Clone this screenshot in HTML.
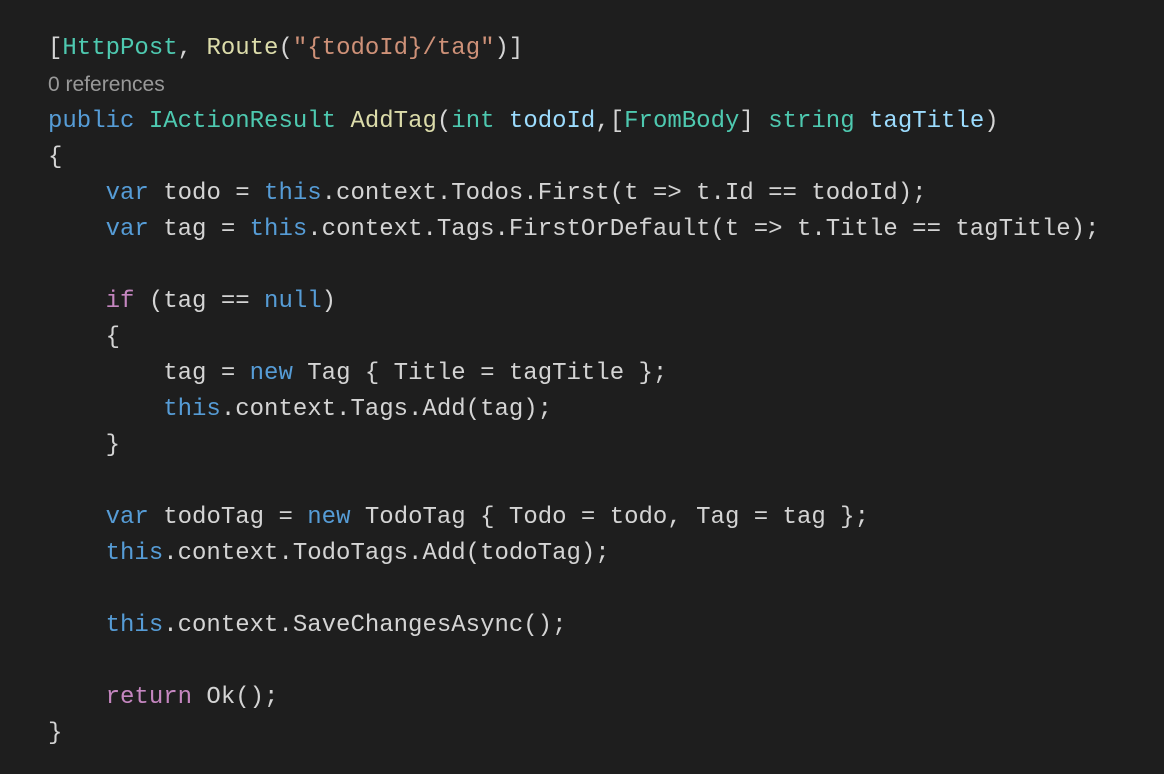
<!DOCTYPE html>
<html><head><meta charset="utf-8"><style>
body{margin:0;background:#1e1e1e;width:1164px;height:774px;overflow:hidden}
pre{margin:0;position:absolute;left:48px;top:31px;font-family:"Liberation Mono",monospace;font-size:24px;line-height:36px;color:#d4d4d4}
.k{color:#569cd6}.t{color:#4ec9b0}.f{color:#dcdcaa}.s{color:#ce9178}.p{color:#9cdcfe}.c{color:#c586c0}
.r{font-family:"Liberation Sans",sans-serif;font-size:21px;color:#999}
</style></head><body><pre>[<span class="t">HttpPost</span>, <span class="f">Route</span>(<span class="s">"{todoId}/tag"</span>)]
<span class="r">0 references</span>
<span class="k">public</span> <span class="t">IActionResult</span> <span class="f">AddTag</span>(<span class="t">int</span> <span class="p">todoId</span>,[<span class="t">FromBody</span>] <span class="t">string</span> <span class="p">tagTitle</span>)
{
    <span class="k">var</span> todo = <span class="k">this</span>.context.Todos.First(t =&gt; t.Id == todoId);
    <span class="k">var</span> tag = <span class="k">this</span>.context.Tags.FirstOrDefault(t =&gt; t.Title == tagTitle);

    <span class="c">if</span> (tag == <span class="k">null</span>)
    {
        tag = <span class="k">new</span> Tag { Title = tagTitle };
        <span class="k">this</span>.context.Tags.Add(tag);
    }

    <span class="k">var</span> todoTag = <span class="k">new</span> TodoTag { Todo = todo, Tag = tag };
    <span class="k">this</span>.context.TodoTags.Add(todoTag);

    <span class="k">this</span>.context.SaveChangesAsync();

    <span class="c">return</span> Ok();
}</pre></body></html>
